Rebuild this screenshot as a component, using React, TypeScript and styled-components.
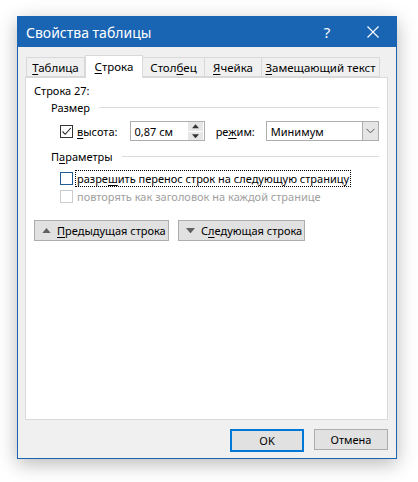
import React from "react";
import styled, { createGlobalStyle } from "styled-components";

const GlobalStyle = createGlobalStyle`
  html, body {
    margin: 0;
    padding: 0;
    background: #ffffff;
  }
  body {
    font-family: "Noto Sans", "Open Sans", sans-serif;
    font-size: 11px;
    color: #000;
    white-space: nowrap;
  }
`;

const Page = styled.div`
  width: 418px;
  height: 482px;
  padding: 16px 0 0 17px;
  box-sizing: border-box;
`;

const Dialog = styled.div`
  width: 380px;
  height: 443px;
  box-sizing: border-box;
  border: 1px solid #1a64b4;
  background: #f0f0f0;
  box-shadow: 0 5px 18px rgba(0, 0, 0, 0.28);
  display: flex;
  flex-direction: column;
`;

const TitleBar = styled.div`
  height: 30px;
  background: #1a64b4;
  color: #fff;
  display: flex;
  align-items: center;
  padding-left: 8px;
  font-size: 14px;
`;

const Title = styled.div`
  flex: 1;
`;

const TitleButton = styled.div<{ $w: number }>`
  width: ${(p) => p.$w}px;
  height: 30px;
  display: flex;
  align-items: center;
  justify-content: center;
  font-size: 15px;
`;

const Body = styled.div`
  flex: 1;
  display: flex;
  flex-direction: column;
  padding: 7px 8px 7px 7px;
`;

const TabStrip = styled.div`
  display: flex;
  align-items: flex-end;
  height: 23px;
  padding-left: 1px;
  position: relative;
  z-index: 1;
`;

const Tab = styled.div<{ $active?: boolean; $w: number }>`
  width: ${(p) => p.$w}px;
  box-sizing: border-box;
  height: ${(p) => (p.$active ? 23 : 20)}px;
  margin-bottom: ${(p) => (p.$active ? -1 : 0)}px;
  border: 1px solid #d9d9d9;
  border-bottom: ${(p) => (p.$active ? "none" : "1px solid #d9d9d9")};
  border-left: ${(p) => (p.$active ? "1px solid #d9d9d9" : "none")};
  background: ${(p) => (p.$active ? "#fff" : "#f0f0f0")};
  display: flex;
  align-items: center;
  justify-content: center;
  font-size: 11.5px;
  padding-bottom: ${(p) => (p.$active ? 2 : 0)}px;
  &:first-child {
    border-left: 1px solid #d9d9d9;
  }
`;

const Key = styled.span`
  text-decoration: underline;
  text-underline-offset: 2px;
`;

const Panel = styled.div`
  height: 343px;
  box-sizing: border-box;
  background: #fff;
  border: 1px solid #d9d9d9;
  padding: 4px 8px 0 8px;
  display: flex;
  flex-direction: column;
`;

const RowLabel = styled.div`
  height: 18px;
  line-height: 18px;
`;

const Group = styled.div`
  padding-left: 17px;
  display: flex;
  flex-direction: column;
`;

const GroupHeader = styled.div<{ $top: number }>`
  display: flex;
  align-items: center;
  gap: 9px;
  height: 18px;
  margin-top: ${(p) => p.$top}px;
  &::after {
    content: "";
    flex: 1;
    height: 1px;
    background: #dcdcdc;
  }
`;

const SizeRow = styled.div`
  display: flex;
  align-items: center;
  height: 20px;
  margin-top: 5px;
  padding-left: 9px;
`;

const Box = styled.span<{ $state: "checked" | "focus" | "disabled" }>`
  width: 13px;
  height: 13px;
  box-sizing: border-box;
  border: 1px solid
    ${(p) =>
      p.$state === "checked" ? "#333" : p.$state === "focus" ? "#1f5d99" : "#cccccc"};
  background: #fff;
  display: inline-flex;
  align-items: center;
  justify-content: center;
  flex-shrink: 0;
`;

const InlineLabel = styled.span<{ $gap: number }>`
  margin-left: ${(p) => p.$gap}px;
`;

const Spinner = styled.div`
  width: 76px;
  height: 20px;
  box-sizing: border-box;
  border: 1px solid #adadad;
  margin-left: 13px;
  display: flex;
  align-items: center;
`;

const SpinText = styled.div`
  flex: 1;
  padding-left: 3px;
`;

const SpinButtons = styled.div`
  width: 15px;
  height: 18px;
  display: flex;
  flex-direction: column;
  gap: 1px;
  margin-right: 1px;
`;

const SpinHalf = styled.div`
  flex: 1;
  background: #e6e6e6;
  display: flex;
  align-items: center;
  justify-content: center;
`;

const Select = styled.div`
  width: 116px;
  height: 20px;
  box-sizing: border-box;
  border: 1px solid #adadad;
  margin-left: 11px;
  display: flex;
  align-items: center;
`;

const SelectText = styled.div`
  flex: 1;
  padding-left: 4px;
`;

const SelectButton = styled.div`
  width: 17px;
  height: 20px;
  margin: -1px -1px -1px 0;
  box-sizing: border-box;
  border: 1px solid #adadad;
  background: #e5e5e5;
  display: flex;
  align-items: center;
  justify-content: center;
`;

const OptionRow = styled.div<{ $top: number; $disabled?: boolean }>`
  display: flex;
  align-items: center;
  height: 17px;
  margin-top: ${(p) => p.$top}px;
  padding-left: 9px;
  color: ${(p) => (p.$disabled ? "#a0a0a0" : "#000")};
`;

const FocusText = styled.span`
  margin-left: 3px;
  padding: 0 1px;
  outline: 1px dotted #000;
  line-height: 15px;
`;

const NavRow = styled.div`
  display: flex;
  gap: 9px;
  margin-top: 15px;
`;

const Button = styled.div<{ $w: number; $default?: boolean }>`
  width: ${(p) => p.$w}px;
  height: ${(p) => (p.$default ? 23 : 21)}px;
  box-sizing: border-box;
  background: #e1e1e1;
  border: ${(p) => (p.$default ? "2px solid #0078d7" : "1px solid #adadad")};
  display: flex;
  align-items: center;
  justify-content: center;
  gap: 6px;
`;

const NavButton = styled(Button)`
  justify-content: flex-start;
  padding-left: 7px;
`;

const Footer = styled.div`
  display: flex;
  justify-content: flex-end;
  gap: 10px;
  margin-top: 9px;
`;

const Tri = ({ down, color = "#555", w = 9 }: { down?: boolean; color?: string; w?: number }) => (
  <svg width={w} height={w / 2 + 1} viewBox="0 0 10 6">
    <path d={down ? "M0 0 L10 0 L5 6 Z" : "M0 6 L10 6 L5 0 Z"} fill={color} />
  </svg>
);

export default function App() {
  return (
    <>
      <GlobalStyle />
      <Page>
        <Dialog>
          <TitleBar>
            <Title>Свойства таблицы</Title>
            <TitleButton $w={46}>?</TitleButton>
            <TitleButton $w={46}>
              <svg width="12" height="12" viewBox="0 0 12 12">
                <path d="M0.5 0.5 L11.5 11.5 M11.5 0.5 L0.5 11.5" stroke="#fff" strokeWidth="1.1" />
              </svg>
            </TitleButton>
          </TitleBar>
          <Body>
            <TabStrip>
              <Tab $w={59}>
                <span><Key>Т</Key>аблица</span>
              </Tab>
              <Tab $w={58} $active>
                <span><Key>С</Key>трока</span>
              </Tab>
              <Tab $w={62}>
                <span>Стол<Key>б</Key>ец</span>
              </Tab>
              <Tab $w={57}>
                <span><Key>Я</Key>чейка</span>
              </Tab>
              <Tab $w={118}>
                <span><Key>З</Key>амещающий текст</span>
              </Tab>
            </TabStrip>
            <Panel>
              <RowLabel>Строка 27:</RowLabel>
              <Group>
                <GroupHeader $top={-2}>
                  <span>Размер</span>
                </GroupHeader>
                <SizeRow>
                  <Box $state="checked">
                    <svg width="11" height="11" viewBox="0 0 11 11">
                      <path d="M1.5 5.5 L4.2 8.3 L9.8 2" stroke="#222" strokeWidth="1.1" fill="none" />
                    </svg>
                  </Box>
                  <InlineLabel $gap={4}><Key>в</Key>ысота:</InlineLabel>
                  <Spinner>
                    <SpinText>0,87 см</SpinText>
                    <SpinButtons>
                      <SpinHalf><Tri w={7} color="#333" /></SpinHalf>
                      <SpinHalf><Tri w={7} color="#333" down /></SpinHalf>
                    </SpinButtons>
                  </Spinner>
                  <InlineLabel $gap={11}>ре<Key>ж</Key>им:</InlineLabel>
                  <Select>
                    <SelectText>Минимум</SelectText>
                    <SelectButton>
                      <svg width="9" height="6" viewBox="0 0 9 6">
                        <path d="M0.5 0.8 L4.5 4.8 L8.5 0.8" stroke="#555" strokeWidth="1" fill="none" />
                      </svg>
                    </SelectButton>
                  </Select>
                </SizeRow>
                <GroupHeader $top={6}>
                  <span>П<Key>а</Key>раметры</span>
                </GroupHeader>
                <OptionRow $top={5}>
                  <Box $state="focus" />
                  <FocusText>разре<Key>ш</Key>ить перенос строк на следующую страницу</FocusText>
                </OptionRow>
                <OptionRow $top={1} $disabled>
                  <Box $state="disabled" />
                  <InlineLabel $gap={4}>повторять как заголовок на каждой странице</InlineLabel>
                </OptionRow>
              </Group>
              <NavRow>
                <NavButton $w={135}>
                  <Tri color="#606060" />
                  <span><Key>П</Key>редыдущая строка</span>
                </NavButton>
                <NavButton $w={127}>
                  <Tri color="#606060" down />
                  <span>С<Key>л</Key>едующая строка</span>
                </NavButton>
              </NavRow>
            </Panel>
            <Footer>
              <Button $w={74} $default>OK</Button>
              <Button $w={74}>Отмена</Button>
            </Footer>
          </Body>
        </Dialog>
      </Page>
    </>
  );
}
